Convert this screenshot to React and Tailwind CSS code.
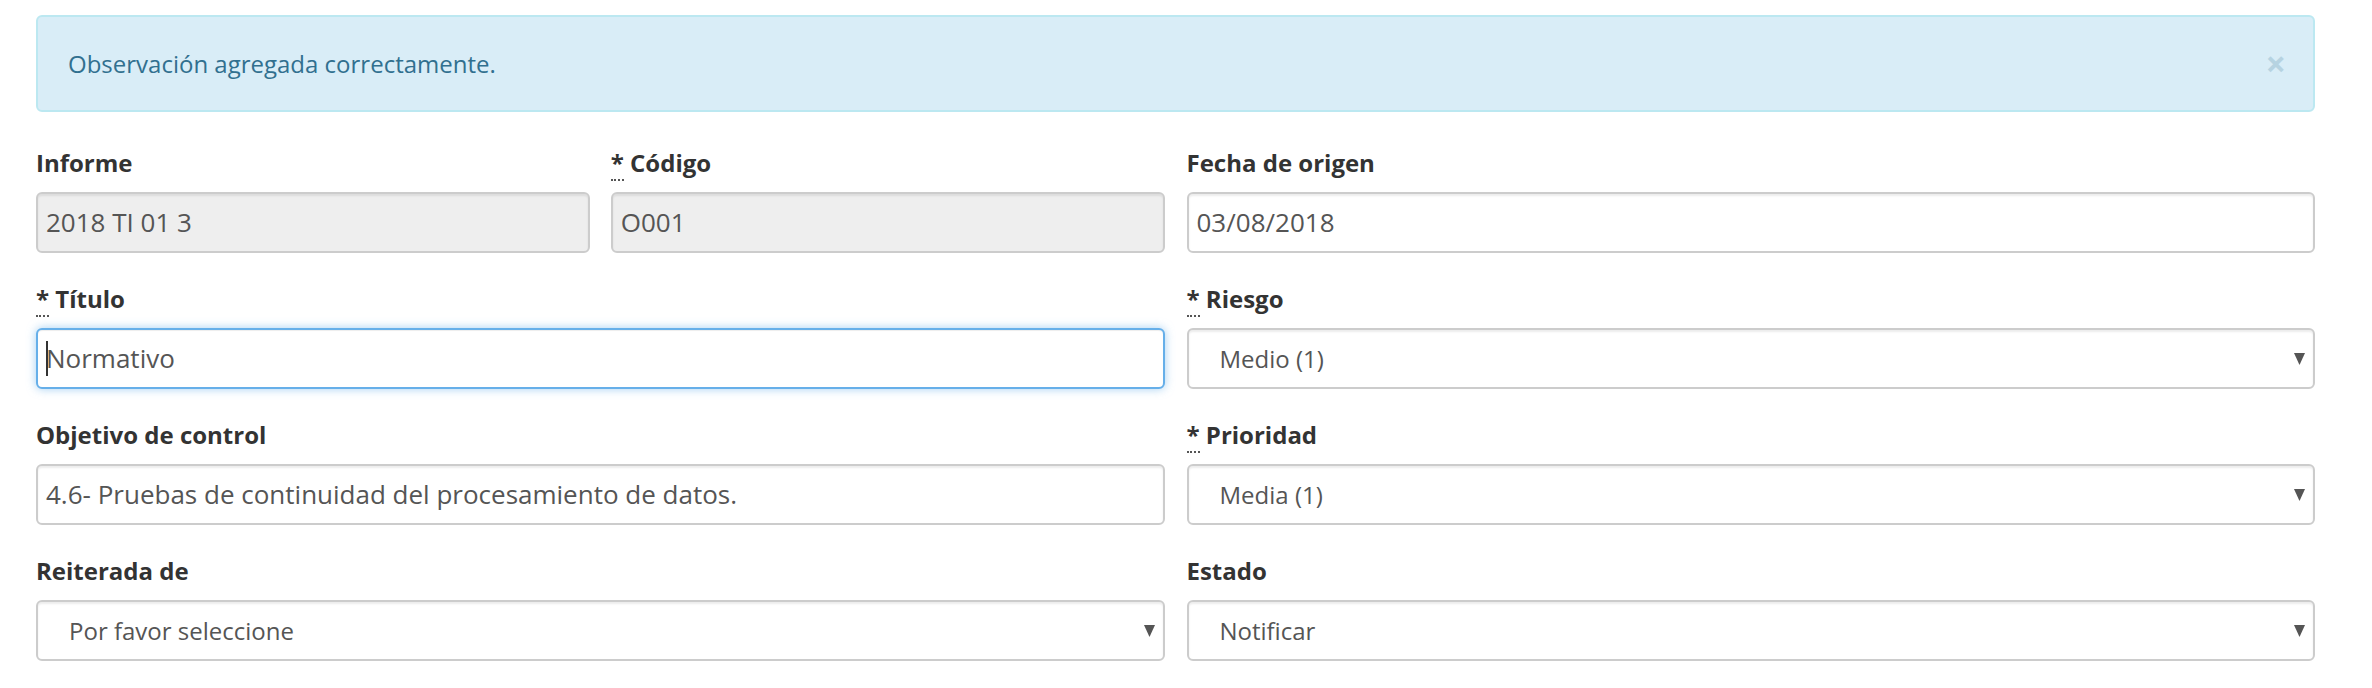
import React from 'react';

const Req = () => (
  <span className="border-b-2 border-dotted border-[#555]">*</span>
);

const Field = ({ label, required, children }) => (
  <div className="mb-[29px]">
    <div className="mb-[12px] text-[24px] font-bold leading-[34px] text-[#333]">
      {required && <><Req /> </>}
      {label}
    </div>
    {children}
  </div>
);

const TextBox = ({ value, disabled, focused }) => {
  let cls =
    'flex h-[61px] items-center rounded-[6px] border-2 px-[8px] text-[26px] text-[#555] whitespace-nowrap';
  if (focused) {
    cls += ' border-[#66afe9] bg-white shadow-[inset_0_1px_1px_rgba(0,0,0,0.075),0_0_10px_rgba(102,175,233,0.6)]';
  } else {
    cls += ' border-[#ccc] shadow-[inset_0_2px_2px_rgba(0,0,0,0.075)]';
    cls += disabled ? ' bg-[#eee]' : ' bg-white';
  }
  return (
    <div className={cls}>
      {focused && <span className="-mr-[2px] h-[35px] w-[2px] bg-[#333]"></span>}
      <span>{value}</span>
    </div>
  );
};

const SelectBox = ({ value }) => (
  <div className="flex h-[61px] items-center justify-between rounded-[6px] border-2 border-[#ccc] bg-white pl-[31px] pr-[8px] text-[24px] text-[#555] shadow-[inset_0_2px_2px_rgba(0,0,0,0.075)]">
    <span>{value}</span>
    <svg width="11" height="12" viewBox="0 0 11 12">
      <polygon points="0,0 11,0 5.5,12" fill="#555" />
    </svg>
  </div>
);

export default function App() {
  return (
    <div className="min-h-screen bg-white pl-[36px] pr-[57px] pt-[15px] font-['Open_Sans',sans-serif]">
      {/* alert */}
      <div className="mb-[34px] flex h-[97px] items-center justify-between rounded-[6px] border-2 border-[#bce8f1] bg-[#d9edf7] pl-[30px] pr-[27px] text-[24px] text-[#31708f]">
        <span>Observación agregada correctamente.</span>
        <span className="text-[36px] font-bold leading-none opacity-20">×</span>
      </div>

      <div className="grid grid-cols-2 gap-x-[22px]">
        <div className="grid grid-cols-2 gap-x-[21px]">
          <Field label="Informe">
            <TextBox value="2018 TI 01 3" disabled />
          </Field>
          <Field label="Código" required>
            <TextBox value="O001" disabled />
          </Field>
        </div>
        <Field label="Fecha de origen">
          <TextBox value="03/08/2018" />
        </Field>

        <Field label="Título" required>
          <TextBox value="Normativo" focused />
        </Field>
        <Field label="Riesgo" required>
          <SelectBox value="Medio (1)" />
        </Field>

        <Field label="Objetivo de control">
          <TextBox value="4.6- Pruebas de continuidad del procesamiento de datos." />
        </Field>
        <Field label="Prioridad" required>
          <SelectBox value="Media (1)" />
        </Field>

        <Field label="Reiterada de">
          <SelectBox value="Por favor seleccione" />
        </Field>
        <Field label="Estado">
          <SelectBox value="Notificar" />
        </Field>
      </div>
    </div>
  );
}
